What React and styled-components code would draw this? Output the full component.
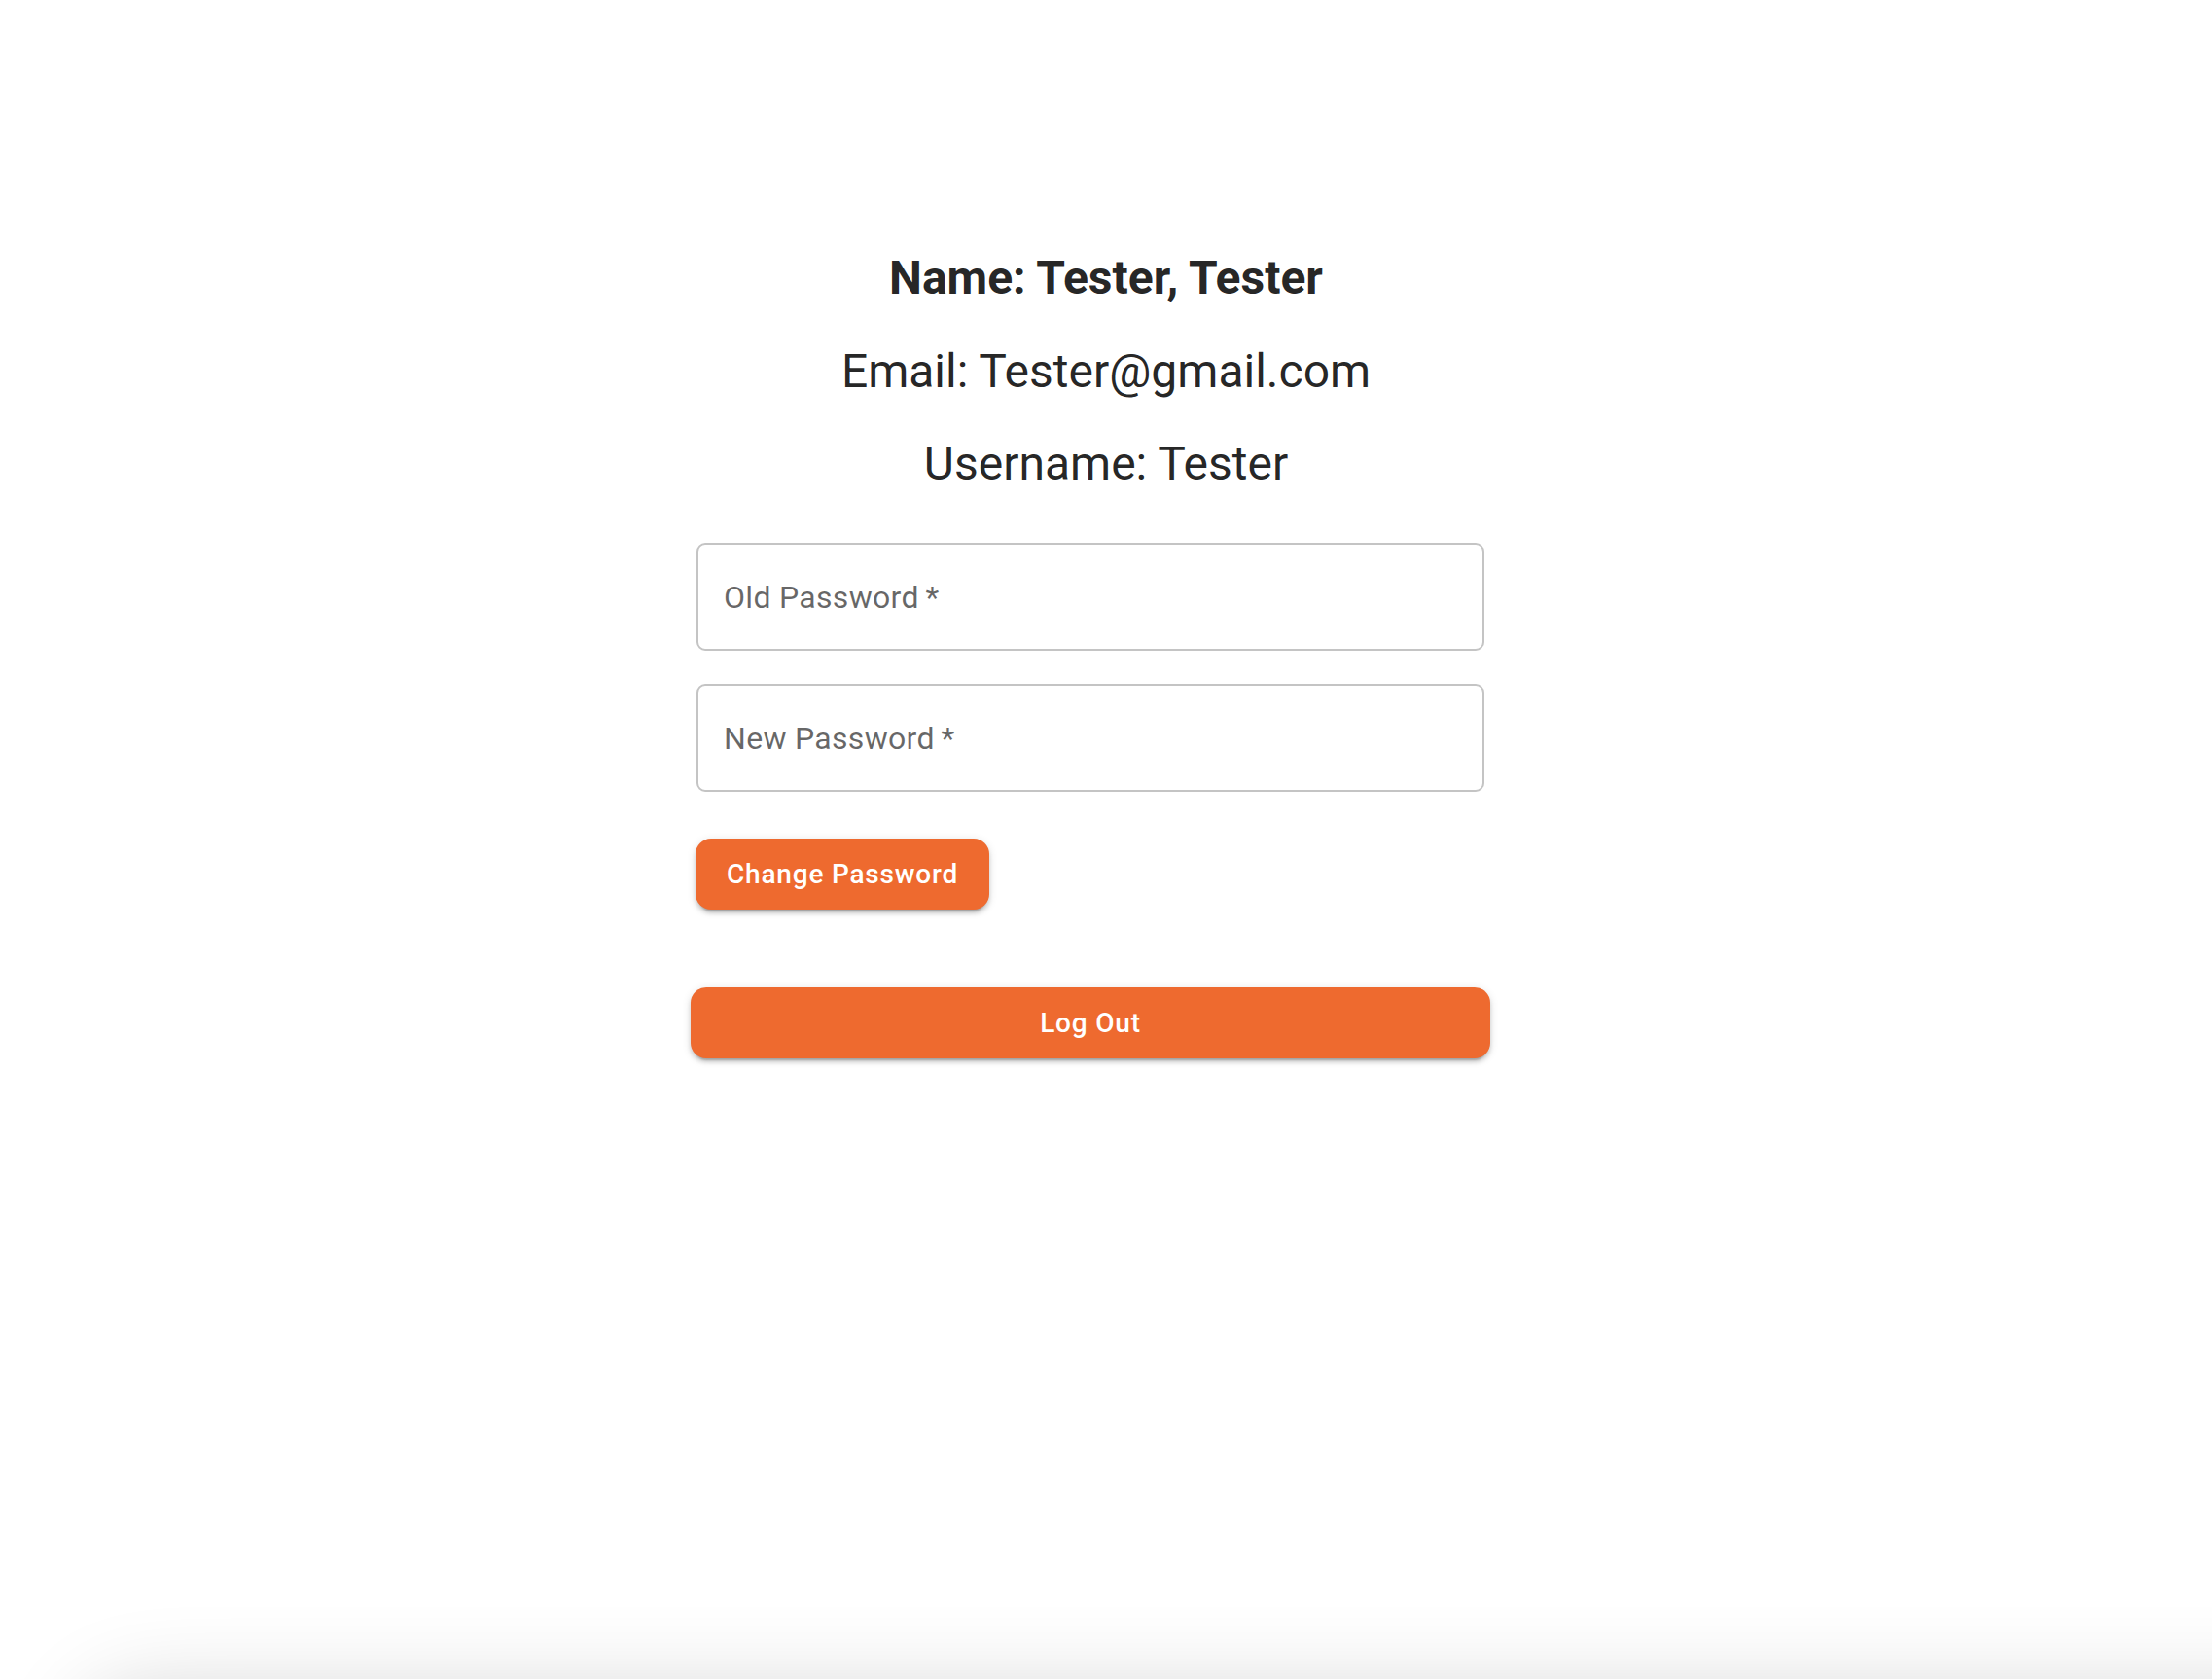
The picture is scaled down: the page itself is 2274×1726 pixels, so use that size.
import React from "react";
import styled, { createGlobalStyle } from "styled-components";

const GlobalStyle = createGlobalStyle`
  html, body {
    margin: 0;
    padding: 0;
    background: #ffffff;
    font-family: Roboto, "Liberation Sans", Arial, sans-serif;
    overflow: hidden;
  }
  * {
    box-sizing: border-box;
  }
`;

const ACCENT = "#ee6a2f";

const Page = styled.div`
  min-height: 1726px;
  padding-top: 238px;
  display: flex;
  flex-direction: column;
`;

const Info = styled.div`
  display: flex;
  flex-direction: column;
  align-items: center;
  color: rgba(0, 0, 0, 0.87);
`;

const InfoLine = styled.div`
  font-size: 48px;
  line-height: 95.5px;
  font-weight: ${(p) => (p.bold ? 700 : 400)};
`;

const FormArea = styled.div`
  display: flex;
  justify-content: center;
  padding-right: 32px;
  margin-top: 33.5px;
`;

const Form = styled.form`
  width: 822px;
  display: flex;
  flex-direction: column;
`;

const Field = styled.input`
  margin: 0 6px 34px;
  height: 111px;
  padding: 0 26px;
  border: 2px solid #c4c4c4;
  border-radius: 9px;
  font-family: inherit;
  font-size: 32px;
  letter-spacing: 0.3px;
  color: rgba(0, 0, 0, 0.87);
  background: #fff;
  outline: none;
  &::placeholder {
    color: rgba(0, 0, 0, 0.6);
    opacity: 1;
  }
`;

const Button = styled.button`
  height: 73px;
  padding: 0 32px;
  border: none;
  border-radius: 16px;
  background: ${ACCENT};
  color: #fff;
  font-family: inherit;
  font-size: 28px;
  font-weight: 500;
  letter-spacing: 0.8px;
  cursor: pointer;
  box-shadow: 0px 6px 2px -4px rgba(0, 0, 0, 0.2),
    0px 4px 4px 0px rgba(0, 0, 0, 0.14), 0px 2px 10px 0px rgba(0, 0, 0, 0.12);
  align-self: ${(p) => (p.full ? "stretch" : "flex-start")};
  margin: ${(p) => (p.full ? "80px 0 0" : "14px 0 0 5px")};
`;

const BottomShade = styled.div`
  position: fixed;
  left: 90px;
  right: -200px;
  top: 1746px;
  height: 200px;
  border-radius: 60px;
  background: #fff;
  box-shadow: 0 0 90px 10px rgba(0, 0, 0, 0.16);
  pointer-events: none;
`;

export default function App() {
  return (
    <>
      <GlobalStyle />
      <Page>
        <Info>
          <InfoLine bold>Name: Tester, Tester</InfoLine>
          <InfoLine>Email: Tester@gmail.com</InfoLine>
          <InfoLine>Username: Tester</InfoLine>
        </Info>
        <FormArea>
          <Form onSubmit={(e) => e.preventDefault()}>
            <Field type="password" placeholder={"Old Password\u2009*"} />
            <Field type="password" placeholder={"New Password\u2009*"} />
            <Button type="submit">Change Password</Button>
            <Button type="button" full>
              Log Out
            </Button>
          </Form>
        </FormArea>
      </Page>
      <BottomShade />
    </>
  );
}
